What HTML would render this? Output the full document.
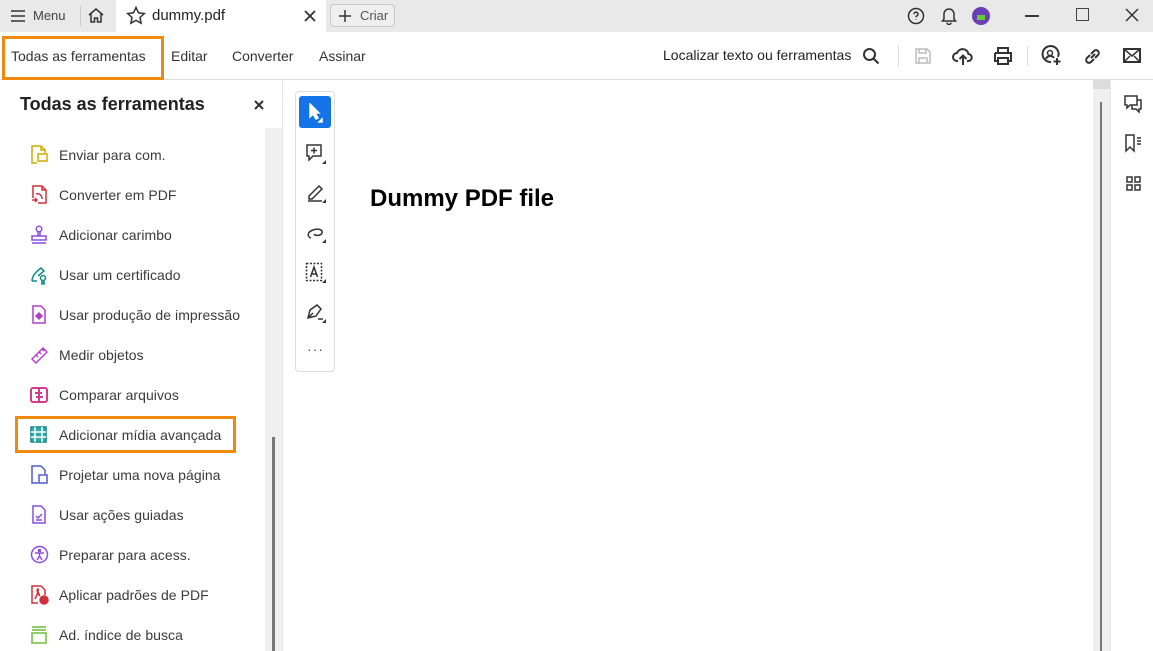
<!DOCTYPE html>
<html><head><meta charset="utf-8"><style>
*{margin:0;padding:0;box-sizing:border-box}
body{width:1153px;height:651px;overflow:hidden;background:#fff;font-family:"Liberation Sans",Arial,sans-serif;color:#2c2c2c;position:relative}
.abs{position:absolute}
svg{position:absolute;fill:none;stroke:#333;stroke-width:1.5}
.t{font-size:14px;color:#333}
.item{position:absolute;left:59px;font-size:14px;color:#3a3a3a;letter-spacing:0.05px}
</style></head><body>
<div class="abs" style="left:0;top:0;width:1153px;height:32px;background:#e9e9e9"></div>
<div class="abs" style="left:116px;top:0;width:210px;height:32px;background:#fff"></div>
<svg style="left:10px;top:9px" width="16" height="14"><path d="M1 2h14M1 7h14M1 12h14"/></svg>
<div class="abs" style="left:33px;top:8px;font-size:13px;color:#444">Menu</div>
<div class="abs" style="left:80px;top:6px;width:1px;height:20px;background:#ccc"></div>
<svg style="left:87px;top:7px" width="18" height="17"><path d="M2 8L9 2l7 6M4 7v8h3.5v-4h3v4H14V7"/></svg>
<svg style="left:126px;top:6px" width="20" height="19"><path d="M10 1.5l2.5 5.3 5.8.7-4.3 4 1.1 5.7L10 14.4l-5.1 2.8 1.1-5.7-4.3-4 5.8-.7z"/></svg>
<div class="abs" style="left:152px;top:7px;font-size:15px;color:#222">dummy.pdf</div>
<svg style="left:304px;top:10px" width="12" height="12"><path d="M1 1l10 10M11 1L1 11" stroke-width="1.8"/></svg>
<div class="abs" style="left:330px;top:4px;width:65px;height:23px;border:1px solid #c8c8c8;border-radius:4px;background:#efefef"></div>
<svg style="left:339px;top:10px" width="12" height="12"><path d="M6 0v12M0 6h12"/></svg>
<div class="abs" style="left:360px;top:8px;font-size:13px;color:#555">Criar</div>
<svg style="left:907px;top:7px" width="18" height="18"><circle cx="9" cy="9" r="7.5"/><path d="M7 7.2a2 2 0 1 1 2.6 1.8c-.5.2-.6.6-.6 1.3M9 12.3v.4"/></svg>
<svg style="left:940px;top:6px" width="18" height="19"><path d="M4 13V8a5 5 0 0 1 10 0v5l1.5 2h-13zM7 16.5a2 2 0 0 0 4 0"/></svg>
<div class="abs" style="left:972px;top:7px;width:18px;height:18px;border-radius:50%;background:#6a3fb5"></div>
<div class="abs" style="left:977px;top:15px;width:8px;height:5px;background:#6c3;"></div>
<div class="abs" style="left:1025px;top:15px;width:14px;height:2px;background:#333"></div>
<div class="abs" style="left:1076px;top:8px;width:13px;height:13px;border:1.5px solid #444"></div>
<svg style="left:1125px;top:8px" width="14" height="14"><path d="M1 1l12 12M13 1L1 13"/></svg>
<div class="abs" style="left:0;top:79px;width:1153px;height:1px;background:#dcdcdc"></div>
<div class="abs" style="left:2px;top:36px;width:162px;height:44px;border:3px solid #f08a0e"></div>
<div class="abs t" style="left:11px;top:48px">Todas as ferramentas</div>
<div class="abs t" style="left:171px;top:48px">Editar</div>
<div class="abs t" style="left:232px;top:48px">Converter</div>
<div class="abs t" style="left:319px;top:48px">Assinar</div>
<div class="abs t" style="left:663px;top:47px;color:#222">Localizar texto ou ferramentas</div>
<svg style="left:862px;top:47px" width="18" height="18"><circle cx="7.5" cy="7.5" r="5.5" stroke-width="2"/><path d="M11.5 11.5l5 5" stroke-width="2"/></svg>
<div class="abs" style="left:898px;top:46px;width:1px;height:20px;background:#ddd"></div>
<svg style="left:914px;top:47px;stroke:#bbb" width="18" height="18"><path d="M2 2h11l3 3v11H2zM5 2v4h7V2M5 16v-5h8v5"/></svg>
<svg style="left:952px;top:46px" width="22" height="20"><path d="M6 15H5a4 4 0 0 1 0-8 6 6 0 0 1 11.5 1A3.5 3.5 0 0 1 16 15h-1M11 19v-9M7.5 13L11 9.5l3.5 3.5" stroke-width="2"/></svg>
<svg style="left:993px;top:47px" width="20" height="18"><path d="M5 6V1h10v5M2 6h16v8h-3M5 14H2V6M5 11h10v6H5z" stroke-width="2"/></svg>
<div class="abs" style="left:1027px;top:46px;width:1px;height:20px;background:#ddd"></div>
<svg style="left:1041px;top:45px" width="21" height="21"><path d="M10 17a8 8 0 1 1 7-5" stroke-width="2"/><circle cx="9" cy="8" r="2.5"/><path d="M5 14a4.5 4.5 0 0 1 8-1M16 13v7M12.5 16.5h7" stroke-width="2"/></svg>
<svg style="left:1083px;top:47px" width="19" height="19"><path d="M8 11l4-4M7 8L4 11a2.8 2.8 0 0 0 4 4l3-3M12 11l3-3a2.8 2.8 0 0 0-4-4L8 7" stroke-width="2"/></svg>
<svg style="left:1123px;top:48px" width="18" height="15"><rect x="1" y="1" width="16" height="13" stroke-width="2"/><path d="M1 1l8 7 8-7M1 14l6-6M17 14l-6-6"/></svg>
<div class="abs" style="left:265px;top:128px;width:17px;height:523px;background:#f0f0f0"></div>
<div class="abs" style="left:272px;top:437px;width:3px;height:214px;background:#777"></div>
<div class="abs" style="left:282px;top:80px;width:1px;height:571px;background:#e3e3e3"></div>
<div class="abs" style="left:20px;top:94px;font-size:18px;font-weight:bold;color:#222">Todas as ferramentas</div>
<svg style="left:254px;top:100px" width="10" height="10"><path d="M1 1l8 8M9 1L1 9" stroke-width="2"/></svg>

<svg style="left:30px;top:145px;stroke:#d4a800" width="18" height="20"><path d="M11 1H2v17h5M11 1l4 4v3M11 1v4h4"/><rect x="8" y="9" width="9" height="7"/></svg>
<div class="item" style="top:147px">Enviar para com.</div>
<svg style="left:30px;top:185px;stroke:#d3303c" width="18" height="20"><path d="M3 13V1h9l4 4v13H8M12 1v4h4M6 9c3-1 6 1 6 5M2 15h5M5 13l2 2-2 2"/></svg>
<div class="item" style="top:187px">Converter em PDF</div>
<svg style="left:30px;top:225px;stroke:#8c4de0" width="18" height="20"><circle cx="9" cy="4" r="2.8"/><path d="M8 7v4M10 7v4M2 11h14v4H2zM2 18h14"/></svg>
<div class="item" style="top:227px">Adicionar carimbo</div>
<svg style="left:30px;top:265px;stroke:#138a8a" width="18" height="20"><path d="M2 16c0-5 5-10 9-13l3 3-6 5M2 16h5"/><circle cx="13" cy="13" r="2.5"/><path d="M12 15v4l1-1 1 1v-4"/></svg>
<div class="item" style="top:267px">Usar um certificado</div>
<svg style="left:30px;top:305px;stroke:#b13ec9" width="18" height="20"><path d="M3 1h8l4 4v13H3z"/><path d="M9 8l3 3-3 3-3-3z" fill="#b13ec9"/></svg>
<div class="item" style="top:307px">Usar produção de impressão</div>
<svg style="left:30px;top:345px;stroke:#b83ed1" width="18" height="20"><path d="M2 14L13 3l4 4L6 18zM6 10l2 2M9 7l2 2M12 4l2 2"/></svg>
<div class="item" style="top:347px">Medir objetos</div>
<svg style="left:30px;top:385px;stroke:#d23c8f" width="18" height="20"><rect x="1" y="3" width="16" height="14" rx="2" stroke-width="2"/><path d="M9 3v14M5 8h7M13 12H6" stroke-width="2"/></svg>
<div class="item" style="top:387px">Comparar arquivos</div>

<div class="abs" style="left:15px;top:416px;width:221px;height:37px;border:3px solid #f08a0e"></div>
<svg style="left:30px;top:426px;stroke:#138a8a" width="17" height="17"><rect x="1" y="1" width="15" height="15" fill="#3aa" stroke="#138a8a"/><path d="M5 1v15M12 1v15M1 6h15M1 11h15" stroke="#fff"/></svg>
<div class="item" style="top:427px">Adicionar mídia avançada</div>
<svg style="left:30px;top:465px;stroke:#4e5bd6" width="18" height="20"><path d="M8 18H2V1h9l4 4v4"/><rect x="9" y="10" width="8" height="8"/></svg>
<div class="item" style="top:467px">Projetar uma nova página</div>
<svg style="left:30px;top:505px;stroke:#8c4de0" width="18" height="20"><path d="M3 1h8l4 4v13H3zM6 11l2 2 4-4M6 15h6"/></svg>
<div class="item" style="top:507px">Usar ações guiadas</div>
<svg style="left:30px;top:545px;stroke:#8c4de0" width="19" height="19"><circle cx="9.5" cy="9.5" r="8"/><circle cx="9.5" cy="5.5" r="1" fill="#8c4de0"/><path d="M5 8h9M9.5 8v3l-2.5 4M9.5 11l2.5 4"/></svg>
<div class="item" style="top:547px">Preparar para acess.</div>
<svg style="left:30px;top:585px;stroke:#d3303c" width="19" height="20"><path d="M8 18H2V1h9l4 4v5M5 14c2-4 4-9 3-10s-2 3 2 7"/><circle cx="14" cy="15" r="4" fill="#d3303c"/></svg>
<div class="item" style="top:587px">Aplicar padrões de PDF</div>
<svg style="left:30px;top:625px;stroke:#6ebf3a" width="18" height="20"><path d="M2 2h14M2 5h14"/><rect x="2" y="8" width="14" height="10"/></svg>
<div class="item" style="top:627px">Ad. índice de busca</div>

<div class="abs" style="left:295px;top:91px;width:40px;height:281px;border:1px solid #ddd;border-radius:4px;background:#fff"></div>
<div class="abs" style="left:299px;top:96px;width:32px;height:32px;background:#1473e6;border-radius:3px"></div>
<svg style="left:308px;top:103px;stroke:#fff;fill:#fff" width="16" height="20"><path d="M2 1v13l3-3 3 5 2-1-3-5h4z"/><path d="M14 16v3h-3z"/></svg>
<svg style="left:305px;top:143px" width="24" height="22"><path d="M2 2h14v11H8l-4 4v-4H2zM9 4.5v6M6 7.5h6"/><path d="M21 17v4h-4z" fill="#333" stroke="none"/></svg>
<svg style="left:305px;top:182px" width="24" height="22"><path d="M4 14L14 4l3 3-10 10H4zM3 19h14" /><path d="M21 17v4h-4z" fill="#333" stroke="none"/></svg>
<svg style="left:305px;top:222px" width="24" height="22"><path d="M6 16c-4-1-4-6 2-8s10 0 9 3-7 3-8 1"/><path d="M21 17v4h-4z" fill="#333" stroke="none"/></svg>
<svg style="left:305px;top:262px" width="24" height="22"><rect x="1.5" y="1.5" width="15" height="17" stroke-dasharray="2 1.5"/><path d="M5.5 15l3.5-10 3.5 10M6.7 12h4.6"/><path d="M21 17v4h-4z" fill="#333" stroke="none"/></svg>
<svg style="left:305px;top:302px" width="24" height="22"><path d="M3 16l2-8 7-5 4 4-5 7-8 2zM3 16l5-5M13 17h5"/><path d="M21 17v4h-4z" fill="#333" stroke="none"/></svg>
<div class="abs" style="left:307px;top:341px;font-size:14px;color:#555;letter-spacing:1px">···</div>

<div class="abs" style="left:370px;top:185px;font-size:24px;font-weight:bold;color:#000">Dummy PDF file</div>

<div class="abs" style="left:1093px;top:80px;width:17px;height:571px;background:#f0f0f0"></div>
<div class="abs" style="left:1093px;top:80px;width:17px;height:9px;background:#dcdcdc"></div>
<div class="abs" style="left:1100px;top:102px;width:2px;height:549px;background:#777"></div>
<div class="abs" style="left:1110px;top:80px;width:1px;height:571px;background:#e6e6e6"></div>
<svg style="left:1124px;top:95px" width="19" height="19"><path d="M1 1h12v9H6l-3 3v-3H1zM13 5h4v9h-2v3l-3-3H8v-4"/></svg>
<svg style="left:1124px;top:134px" width="19" height="19"><path d="M2 1h8v16l-4-4-4 4zM13 4h4M13 7h4M13 10h4"/></svg>
<svg style="left:1126px;top:176px" width="15" height="15"><rect x="1" y="1" width="5" height="5"/><rect x="9" y="1" width="5" height="5"/><rect x="1" y="9" width="5" height="5"/><rect x="9" y="9" width="5" height="5"/></svg>
</body></html>
